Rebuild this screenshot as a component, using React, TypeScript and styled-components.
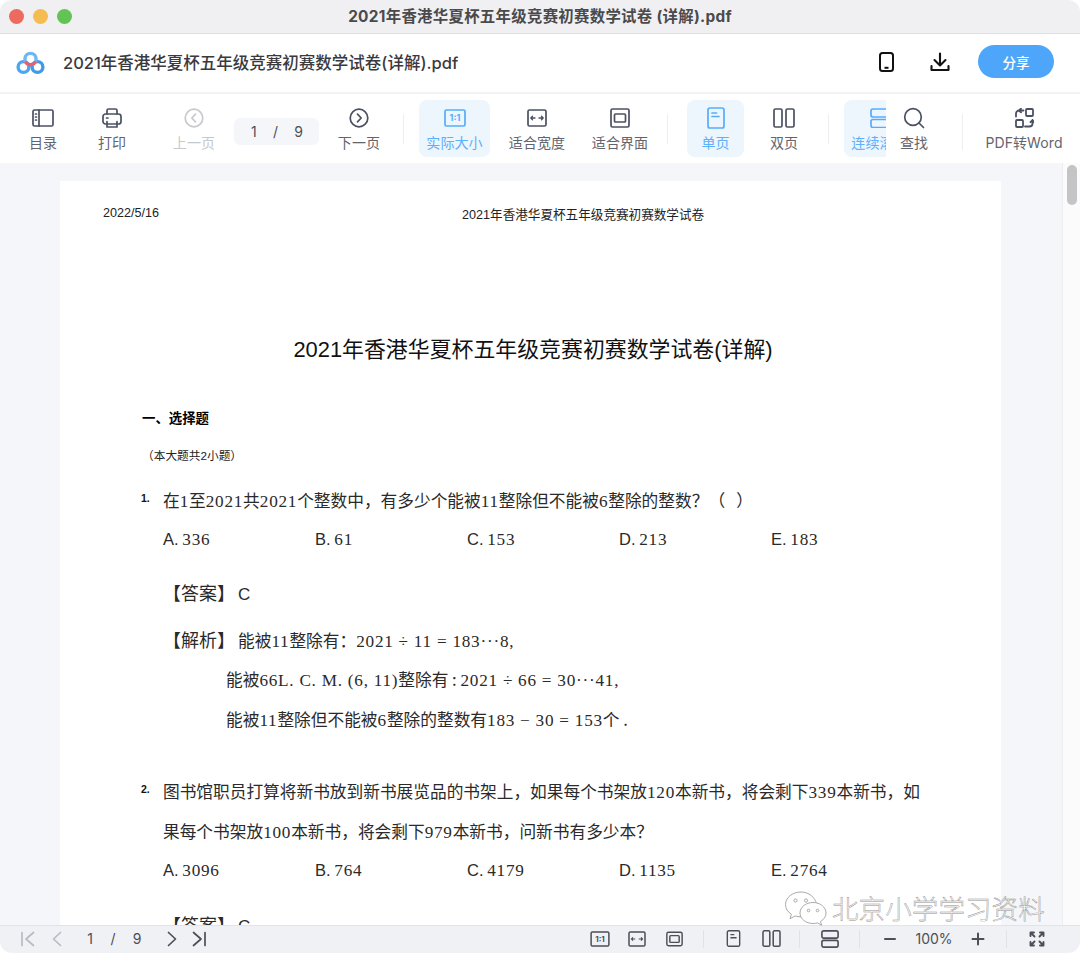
import React from "react";
import styled, { createGlobalStyle } from "styled-components";

const Global = createGlobalStyle`
  html, body { margin: 0; padding: 0; background: #fff; }
  #root { width: 1080px; height: 953px; overflow: hidden; }
  * { box-sizing: border-box; }
`;
const UI = `"Inter", "Noto Sans CJK SC", sans-serif`;
const DOC = `"Noto Sans CJK SC", sans-serif`;
const DOCS = `"Liberation Sans", "Noto Sans CJK SC", sans-serif`;

const Win = styled.div`
  position: relative; width: 1080px; height: 953px; display: flex; flex-direction: column;
  border-radius: 12px; overflow: hidden; background: #fff; font-family: ${UI};
`;
const TitleBar = styled.div`
  height: 34px; flex: none; background: #f0f0f3; border-bottom: 1px solid #dedee0;
  display: flex; align-items: center; position: relative; justify-content: center; padding-bottom: 3px;
  font-size: 15.4px; font-weight: 700; color: #4a4a4c; letter-spacing: 0.3px;
`;
const Lights = styled.div`
  position: absolute; left: 9px; top: 9px; display: flex; gap: 9px;
`;
const Light = styled.span<{ $c: string }>`
  width: 15px; height: 15px; border-radius: 50%; background: ${p => p.$c};
`;
const Header = styled.div`
  height: 60px; flex: none; display: flex; align-items: center; padding-left: 16px;
  border-bottom: 2px solid #f3f3f5;
`;
const DocName = styled.div`
  margin-left: 18px; font-size: 16.5px; font-weight: 500; color: #3a3a3e; flex: 1; padding-bottom: 2px;
`;
const HeadIcon = styled.div<{ $w: number; $ml?: number }>`
  width: ${p => p.$w}px; margin-left: ${p => p.$ml ?? 0}px; display: flex; justify-content: center; padding-bottom: 3px;
`;
const Share = styled.div`
  width: 76px; height: 33px; border-radius: 17px; background: #4ea6fb; color: #fff;
  font-size: 13.5px; font-weight: 500; display: flex; align-items: center; justify-content: center;
  margin: 0 26px 3px 12px;
`;
const Toolbar = styled.div`
  height: 69px; flex: none; display: flex; background: #fff;
`;
const ToolScroll = styled.div`
  width: 886px; flex: none; overflow: hidden; display: flex; padding: 6px 0 6px 8px;
`;
const ToolRight = styled.div`
  flex: 1; display: flex; padding: 6px 0 6px 3px; background: #fff; border-radius: 10px 0 0 10px;
`;
const Tool = styled.div<{ $w: number; $ml?: number; $active?: boolean; $disabled?: boolean }>`
  width: ${p => p.$w}px; flex: none; margin-left: ${p => p.$ml ?? 0}px; height: 57px;
  display: flex; flex-direction: column; align-items: center; padding-top: 6px; border-radius: 8px;
  background: ${p => (p.$active ? "#edf5fd" : "transparent")};
  color: ${p => (p.$active ? "#5db0fb" : p.$disabled ? "#c8c9cc" : "#62656e")};
`;
const ToolIcon = styled.div`
  height: 24px; display: flex; align-items: center; justify-content: center;
`;
const ToolLabel = styled.div`
  margin-top: 3px; font-size: 14px; line-height: 20px; white-space: nowrap; letter-spacing: 0.1px;
`;
const Sep = styled.div<{ $ml: number; $h?: number }>`
  width: 1px; flex: none; background: #eeeef1; margin-left: ${p => p.$ml}px;
  height: ${p => p.$h ?? 30}px; margin-top: 14px;
`;
const Pager = styled.div`
  width: 85px; height: 27px; flex: none; margin: 18px 0 0 4px; background: #f5f6fa; border-radius: 6px;
  display: flex; justify-content: space-between; align-items: center; padding: 0 16px 0 17px;
  font-size: 14px; color: #4c4f58;
`;
const Stage = styled.div`
  flex: 1; min-height: 0; display: flex; background: #f5f6fa; overflow: hidden;
`;
const PageWrap = styled.div`
  flex: 1; padding: 18px 61px 0 60px; overflow: hidden;
`;
const Scrollbar = styled.div`
  width: 18px; flex: none; background: #fbfbfc; border-left: 1px solid #eeeef0; padding: 2px 0 0 4px;
`;
const Thumb = styled.div`
  width: 10px; height: 40px; border-radius: 5px; background: #c4c4c6;
`;
const Page = styled.div`
  width: 941px; height: 800px; background: #fff; position: relative; color: #222;
  font-family: ${DOC}; display: flex; flex-direction: column; padding-top: 22px;
`;
const RunHead = styled.div`
  display: flex; height: 20px; align-items: center; font-family: ${DOCS}; font-size: 12.6px; color: #222; padding-left: 43px;
`;
const RunTitle = styled.div`
  margin-left: 303px;
`;
const DocTitle = styled.div`
  margin-top: 111px; height: 32px; line-height: 32px; text-align: center; font-family: ${DOCS};
  font-size: 21.9px; color: #111; padding-left: 5px;
`;
const Section = styled.div`
  margin: 43px 0 0 82px; height: 20px; line-height: 20px; font-family: ${DOCS}; font-size: 13.4px; font-weight: 700; color: #000;
`;
const Note = styled.div`
  margin: 17px 0 0 82px; height: 20px; line-height: 20px; font-family: ${DOCS}; font-size: 11.7px; color: #222;
`;
const Line = styled.div<{ $mt: number; $left: number }>`
  margin: ${p => p.$mt}px 0 0 ${p => p.$left}px; height: 24px; line-height: 24px; font-size: 16.7px;
  white-space: nowrap; position: relative; color: #2a2a2a;
`;
const Num = styled.span`
  position: absolute; left: -22px; top: -2px; font-family: ${DOCS}; font-size: 10.5px; font-weight: 700; color: #111;
`;
const Options = styled.div<{ $mt: number }>`
  margin: ${p => p.$mt}px 0 0 103px; height: 24px; display: grid; grid-template-columns: repeat(5, 152px);
  line-height: 24px; font-size: 16.5px; color: #2a2a2a; white-space: nowrap;
`;
const Sans = styled.span`
  font-family: ${DOCS};
`;
const Answer = styled.span`
  font-size: 18px; margin-right: 3px;
`;
const AnswerLetter = styled.span`
  font-family: ${DOCS}; font-size: 17px;
`;
const MathRun = styled.span`
  font-family: "Liberation Serif", serif; font-size: 17.2px; letter-spacing: 0.75px;
`;
const StatusBar = styled.div`
  height: 28px; flex: none; background: #f0f1f5; border-top: 1px solid #e2e3e8; display: flex;
  align-items: center; font-size: 14px; color: #4c4f58; padding-bottom: 2px;
`;
const Slot = styled.div<{ $w: number; $ml?: number; $muted?: boolean }>`
  width: ${p => p.$w}px; flex: none; margin-left: ${p => p.$ml ?? 0}px; display: flex; justify-content: center; align-items: center;
  color: ${p => (p.$muted ? "#b9bbc2" : "#4c4f58")}; height: 24px;
`;
const StatusSep = styled.div<{ $ml: number }>`
  width: 1px; height: 18px; flex: none; background: #e1e2e7; margin-left: ${p => p.$ml}px;
`;
const Watermark = styled.div`
  position: absolute; left: 784px; top: 888px; display: flex; align-items: center; gap: 5px; pointer-events: none;
`;
const WatermarkText = styled.span`
  font-family: "Noto Sans CJK SC", sans-serif; font-size: 26.5px; font-weight: 300; color: #fff;
  -webkit-text-stroke: 0.45px #8f8f8f; white-space: nowrap; letter-spacing: 0.1px;
`;

/* Digits and formula characters in the document are set in a serif run. */
const T = ({ children }: { children: string }) => (
  <>
    {children.split(/([0-9][0-9 .,()÷=·−:]*)/).map((part, i) =>
      i % 2 === 1 ? <MathRun key={i}>{part}</MathRun> : <React.Fragment key={i}>{part}</React.Fragment>
    )}
  </>
);

const S = { fill: "none", stroke: "currentColor", strokeLinecap: "round" as const, strokeLinejoin: "round" as const };
const Ico = ({ w = 24, h = 24, children, sw }: { w?: number; h?: number; children: React.ReactNode; sw?: number }) => (
  <svg width={w} height={h} viewBox={`0 0 ${w} ${h}`} {...S} strokeWidth={sw ?? 1.7}>{children}</svg>
);
const Dark = styled.span`color: #4b5162; display: flex;`;
const Blue = styled.span`color: #55adfa; display: flex;`;
const Gray = styled.span`color: #c8c9cc; display: flex;`;

const Logo = () => (
  <svg width="29" height="24" viewBox="0 0 29 24" fill="none" strokeWidth="3.4">
    <circle cx="7.5" cy="16" r="5.4" stroke="#4ba6f2" />
    <circle cx="21.5" cy="16" r="5.4" stroke="#3f9bea" />
    <circle cx="14.5" cy="8" r="5.6" stroke="#6db7f5" />
    <path d="M9.4 10.4 A5.6 5.6 0 0 0 19.6 10.4" stroke="#e8606e" />
  </svg>
);
const RatioIcon = ({ small }: { small?: boolean }) => (
  <svg width={small ? 20 : 22} height={small ? 16 : 18} viewBox="0 0 22 18" fill="none" stroke="currentColor" strokeWidth="1.7">
    <rect x="1" y="1" width="20" height="16" rx="1.5" />
    <text x="11" y="12.4" fontSize="9" fontWeight="700" fill="currentColor" stroke="none" textAnchor="middle" fontFamily="Inter, sans-serif">1:1</text>
  </svg>
);
const WidthIcon = () => (
  <Ico w={20} h={18}>
    <rect x="1" y="1" width="18" height="16" rx="1.5" />
    <path d="M4 9h4M12 9h4M5.5 7.2 3.8 9l1.7 1.8M14.5 7.2 16.2 9l-1.7 1.8" strokeWidth="1.3" />
  </Ico>
);
const FitIcon = () => (
  <Ico w={20} h={20}>
    <rect x="1" y="1" width="18" height="18" rx="1.5" />
    <rect x="4.5" y="6" width="11" height="8" rx="1" />
  </Ico>
);
const SingleIcon = () => (
  <Ico w={18} h={22}>
    <rect x="1" y="1" width="16" height="20" rx="2" />
    <path d="M5 6h4.5M5 9.5h7" />
  </Ico>
);
const DoubleIcon = () => (
  <Ico w={22} h={20}>
    <rect x="1" y="1" width="8" height="18" rx="1.5" />
    <rect x="13" y="1" width="8" height="18" rx="1.5" />
  </Ico>
);
const ContIcon = () => (
  <Ico w={20} h={20}>
    <rect x="1" y="1" width="18" height="8" rx="2" />
    <rect x="1" y="11.5" width="18" height="8" rx="2" />
  </Ico>
);

const Opt = ({ l, v }: { l: string; v: string }) => (
  <span><Sans>{l}.</Sans> <MathRun>{v}</MathRun></span>
);

export default function App() {
  return (
    <Win>
      <Global />
      <TitleBar>
        <Lights><Light $c="#ee6a5f" /><Light $c="#f5bd4f" /><Light $c="#61c454" /></Lights>
        2021年香港华夏杯五年级竞赛初赛数学试卷 (详解).pdf
      </TitleBar>
      <Header>
        <Logo />
        <DocName>2021年香港华夏杯五年级竞赛初赛数学试卷(详解).pdf</DocName>
        <HeadIcon $w={53} $ml={1}>
          <svg width="15" height="20" viewBox="0 0 15 20" fill="none" stroke="#111" strokeWidth="2"><rect x="1" y="1" width="13" height="18" rx="2.5" /><path d="M5.5 15.8h4" /></svg>
        </HeadIcon>
        <HeadIcon $w={53}>
          <svg width="20" height="20" viewBox="0 0 20 20" fill="none" stroke="#111" strokeWidth="2.1" strokeLinecap="round" strokeLinejoin="round"><path d="M10 1.5v11.5M4.5 8 10 13.5 15.5 8M1.5 14v4h17v-4" /></svg>
        </HeadIcon>
        <Share>分享</Share>
      </Header>
      <Toolbar>
        <ToolScroll>
          <Tool $w={70}>
            <ToolIcon><Dark><Ico w={22} h={18}><rect x="1" y="1" width="20" height="16" rx="1.5" /><path d="M7 1v16M3.5 5h1M3.5 8h1M3.5 11h1" /></Ico></Dark></ToolIcon>
            <ToolLabel>目录</ToolLabel>
          </Tool>
          <Tool $w={68}>
            <ToolIcon><Dark><Ico w={20} h={20}><path d="M5 6V2.5A1.5 1.5 0 0 1 6.5 1h7A1.5 1.5 0 0 1 15 2.5V6" /><rect x="1" y="6" width="18" height="10" rx="2.5" /><path d="M5 13.5V19h10v-5.5M4.5 10h1.5" /></Ico></Dark></ToolIcon>
            <ToolLabel>打印</ToolLabel>
          </Tool>
          <Tool $w={72} $ml={12} $disabled>
            <ToolIcon><Gray><Ico w={20} h={20}><circle cx="10" cy="10" r="8.8" /><path d="M11.5 6.2 7.8 10l3.7 3.8" /></Ico></Gray></ToolIcon>
            <ToolLabel>上一页</ToolLabel>
          </Tool>
          <Pager><span>1</span><span>/</span><span>9</span></Pager>
          <Tool $w={70} $ml={5}>
            <ToolIcon><Dark><Ico w={20} h={20}><circle cx="10" cy="10" r="8.8" /><path d="M8.5 6.2 12.2 10l-3.7 3.8" /></Ico></Dark></ToolIcon>
            <ToolLabel>下一页</ToolLabel>
          </Tool>
          <Sep $ml={9} />
          <Tool $w={71} $ml={15} $active>
            <ToolIcon><Blue><RatioIcon /></Blue></ToolIcon>
            <ToolLabel>实际大小</ToolLabel>
          </Tool>
          <Tool $w={82} $ml={6}>
            <ToolIcon><Dark><WidthIcon /></Dark></ToolIcon>
            <ToolLabel>适合宽度</ToolLabel>
          </Tool>
          <Tool $w={82} $ml={1}>
            <ToolIcon><Dark><FitIcon /></Dark></ToolIcon>
            <ToolLabel>适合界面</ToolLabel>
          </Tool>
          <Sep $ml={6} />
          <Tool $w={57} $ml={19} $active>
            <ToolIcon><Blue><SingleIcon /></Blue></ToolIcon>
            <ToolLabel>单页</ToolLabel>
          </Tool>
          <Tool $w={58} $ml={11}>
            <ToolIcon><Dark><DoubleIcon /></Dark></ToolIcon>
            <ToolLabel>双页</ToolLabel>
          </Tool>
          <Sep $ml={15} />
          <Tool $w={71} $ml={15} $active>
            <ToolIcon><Blue><ContIcon /></Blue></ToolIcon>
            <ToolLabel>连续滚动</ToolLabel>
          </Tool>
        </ToolScroll>
        <ToolRight>
          <Tool $w={50}>
            <ToolIcon><Dark><Ico w={22} h={22}><circle cx="10" cy="10" r="8.3" /><path d="m16 16 4.5 4.5" /></Ico></Dark></ToolIcon>
            <ToolLabel>查找</ToolLabel>
          </Tool>
          <Sep $ml={23} $h={36} />
          <Tool $w={78} $ml={22}>
            <ToolIcon><Dark><Ico w={20} h={20} sw={1.8}><rect x="12" y="1" width="7" height="7" rx="1" /><rect x="2" y="12" width="7" height="7" rx="1" /><path d="M2 8.5V5.5A3 3 0 0 1 5 2.5h4.500M7 .6 4.800 2.500 7 4.400M11 18.500h4.500a3 3 0 0 0 3-3V12M16.500 14.200 18.500 12l1.500 2.200" /></Ico></Dark></ToolIcon>
            <ToolLabel>PDF转Word</ToolLabel>
          </Tool>
        </ToolRight>
      </Toolbar>
      <Stage>
        <PageWrap>
          <Page>
            <RunHead>2022/5/16<RunTitle>2021年香港华夏杯五年级竞赛初赛数学试卷</RunTitle></RunHead>
            <DocTitle>2021年香港华夏杯五年级竞赛初赛数学试卷(详解)</DocTitle>
            <Section>一、选择题</Section>
            <Note>（本大题共2小题）</Note>
            <Line $mt={22} $left={103}><Num>1.</Num><T>在1至2021共2021个整数中，有多少个能被11整除但不能被6整除的整数？</T>（ &nbsp; ）</Line>
            <Options $mt={14}>
              <Opt l="A" v="336" /><Opt l="B" v="61" /><Opt l="C" v="153" /><Opt l="D" v="213" /><Opt l="E" v="183" />
            </Options>
            <Line $mt={30} $left={103}><Answer>【答案】</Answer><AnswerLetter>C</AnswerLetter></Line>
            <Line $mt={23} $left={103}><Answer>【解析】</Answer><T>能被11整除有：2021 ÷ 11 = 183···8,</T></Line>
            <Line $mt={16} $left={166}><T>能被66</T><MathRun>L. C. M. (6, 11)</MathRun><T>整除有 : 2021 ÷ 66 = 30···41,</T></Line>
            <Line $mt={16} $left={166}><T>能被11整除但不能被6整除的整数有183 − 30 = 153个 .</T></Line>
            <Line $mt={48} $left={103}><Num>2.</Num><T>图书馆职员打算将新书放到新书展览品的书架上，如果每个书架放120本新书，将会剩下339本新书，如</T></Line>
            <Line $mt={16} $left={103}><T>果每个书架放100本新书，将会剩下979本新书，问新书有多少本？</T></Line>
            <Options $mt={14}>
              <Opt l="A" v="3096" /><Opt l="B" v="764" /><Opt l="C" v="4179" /><Opt l="D" v="1135" /><Opt l="E" v="2764" />
            </Options>
            <Line $mt={31} $left={103}><Answer>【答案】</Answer><AnswerLetter>C</AnswerLetter></Line>
          </Page>
        </PageWrap>
        <Scrollbar><Thumb /></Scrollbar>
      </Stage>
      <StatusBar>
        <Slot $w={20} $ml={18} $muted><Ico w={16} h={16}><path d="M2 1.5v13M13.5 1.5 6 8l7.5 6.5" /></Ico></Slot>
        <Slot $w={20} $ml={9} $muted><Ico w={12} h={16}><path d="M9.5 1.5 2.5 8l7 6.5" /></Ico></Slot>
        <Slot $w={16} $ml={15}>1</Slot>
        <Slot $w={16} $ml={7}>/</Slot>
        <Slot $w={16} $ml={8}>9</Slot>
        <Slot $w={20} $ml={17}><Ico w={12} h={16}><path d="M2.5 1.5 9.5 8l-7 6.5" /></Ico></Slot>
        <Slot $w={20} $ml={7}><Ico w={16} h={16}><path d="M14 1.5v13M2.5 1.5 10 8l-7.5 6.5" /></Ico></Slot>
        <Slot $w={24} $ml={379}><RatioIcon small /></Slot>
        <Slot $w={24} $ml={13}><svg width="18" height="16" viewBox="0 0 20 18" fill="none" stroke="currentColor" strokeWidth="1.7"><rect x="1" y="1" width="18" height="16" rx="1.5" /><path d="M4 9h4M12 9h4M5.5 7.2 3.8 9l1.7 1.8M14.5 7.2 16.2 9l-1.7 1.8" strokeWidth="1.3" /></svg></Slot>
        <Slot $w={24} $ml={13}><svg width="17" height="16" viewBox="0 0 20 18" fill="none" stroke="currentColor" strokeWidth="1.7"><rect x="1" y="1" width="18" height="16" rx="2" /><rect x="4.5" y="5" width="11" height="8" rx="1" /></svg></Slot>
        <StatusSep $ml={17} />
        <Slot $w={24} $ml={17}><svg width="15" height="17" viewBox="0 0 18 22" fill="none" stroke="currentColor" strokeWidth="1.8"><rect x="1" y="1" width="16" height="20" rx="2" /><path d="M5 6h5M5 10h8" /></svg></Slot>
        <Slot $w={24} $ml={14}><svg width="19" height="17" viewBox="0 0 22 20" fill="none" stroke="currentColor" strokeWidth="1.8"><rect x="1" y="1" width="8" height="18" rx="1.5" /><rect x="13" y="1" width="8" height="18" rx="1.5" /></svg></Slot>
        <StatusSep $ml={16} />
        <Slot $w={24} $ml={18}><svg width="18" height="18" viewBox="0 0 20 20" fill="none" stroke="currentColor" strokeWidth="1.8"><rect x="1" y="1" width="18" height="8" rx="2" /><rect x="1" y="11.5" width="18" height="7.5" rx="2" /></svg></Slot>
        <StatusSep $ml={17} />
        <Slot $w={24} $ml={18}><Ico w={14} h={14} sw={2}><path d="M2 7h10" /></Ico></Slot>
        <Slot $w={44} $ml={10}>100%</Slot>
        <Slot $w={24} $ml={10}><Ico w={14} h={14} sw={2}><path d="M1.5 7h11M7 1.5v11" /></Ico></Slot>
        <StatusSep $ml={16} />
        <Slot $w={24} $ml={18}><Ico w={16} h={16} sw={1.9}><path d="M1.5 5V1.5H5M1.5 1.5l4 4M11 1.5h3.5V5M14.5 1.5l-4 4M1.5 11v3.5H5M1.5 14.5l4-4M11 14.5h3.5V11M14.5 14.5l-4-4" /></Ico></Slot>
      </StatusBar>
      <Watermark>
        <svg width="43" height="36" viewBox="0 0 43 36" fill="#fff" stroke="#a0a0a0" strokeWidth="0.9">
          <path d="M17 2C8.5 2 1.5 7.6 1.5 14.6c0 4 2.3 7.4 5.9 9.7l-1.4 4.4 5.2-2.7c1.8.5 3.7.8 5.8.8.5 0 1 0 1.5-.1" />
          <path d="M32.5 14.2C31.2 7.2 24.8 2 17 2" />
          <circle cx="11.5" cy="10.5" r="1.6" fill="none" />
          <circle cx="22" cy="10.5" r="1.6" fill="none" />
          <path d="M29 12.5c-7.2 0-13 4.7-13 10.5s5.8 10.5 13 10.5c1.5 0 3-.2 4.4-.6l4.2 2.3-1.1-3.7c3.4-2 5.5-5 5.5-8.5 0-5.8-5.8-10.500-13-10.500z" />
          <circle cx="24.5" cy="20.5" r="1.3" fill="none" />
          <circle cx="33.5" cy="20.5" r="1.3" fill="none" />
        </svg>
        <WatermarkText>北京小学学习资料</WatermarkText>
      </Watermark>
    </Win>
  );
}
